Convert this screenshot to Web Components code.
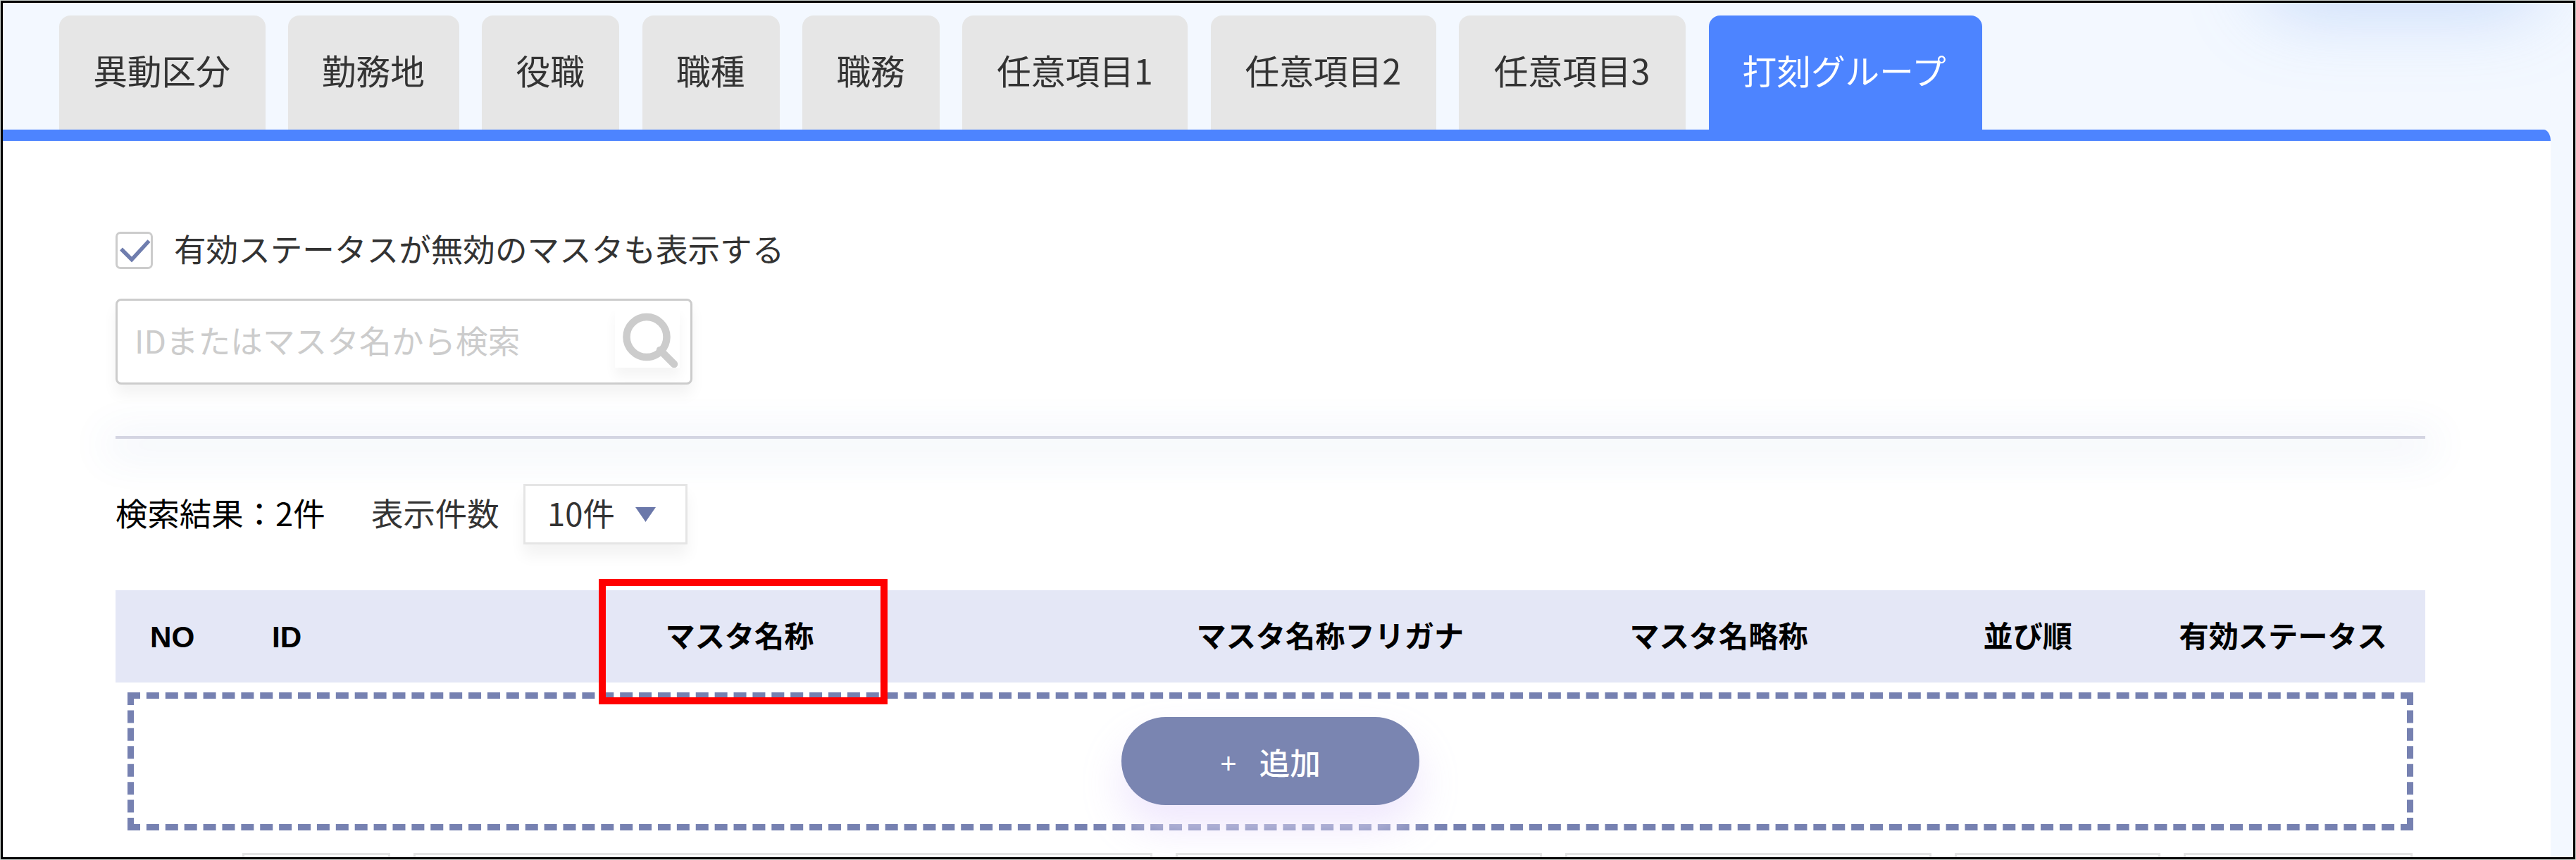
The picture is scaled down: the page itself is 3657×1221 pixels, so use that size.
<!DOCTYPE html>
<html lang="ja">
<head>
<meta charset="utf-8">
<title>マスタ管理</title>
<style>
  html,body{margin:0;padding:0}
  body{
    width:3657px;height:1221px;overflow:hidden;background:#c9cfcc;
    font-family:"Noto Sans CJK JP","Noto Sans",sans-serif;color:#333;
  }
</style>
</head>
<body>
<master-page>
  <master-tabs slot="tabs">
    <master-tab style="--w:293px">異動区分</master-tab>
    <master-tab style="--w:243px">勤務地</master-tab>
    <master-tab style="--w:195px">役職</master-tab>
    <master-tab style="--w:195px">職種</master-tab>
    <master-tab style="--w:195px">職務</master-tab>
    <master-tab style="--w:320px">任意項目1</master-tab>
    <master-tab style="--w:320px">任意項目2</master-tab>
    <master-tab style="--w:322px">任意項目3</master-tab>
    <master-tab style="--w:388px" active>打刻グループ</master-tab>
  </master-tabs>
  <check-option>有効ステータスが無効のマスタも表示する</check-option>
  <search-box placeholder="IDまたはマスタ名から検索"></search-box>
  <section-rule></section-rule>
  <result-bar count="検索結果：2件" label="表示件数" size="10件"></result-bar>
  <master-table></master-table>
</master-page>

<script>
(() => {
  const define = (name, render) => {
    customElements.define(name, class extends HTMLElement {
      connectedCallback() {
        if (this.shadowRoot) return;
        this.attachShadow({ mode: "open" }).innerHTML = render(this);
      }
    });
  };

  define("master-page", () => `
    <style>
      :host{
        display:flex;flex-direction:column;box-sizing:border-box;position:relative;overflow:hidden;
        width:3655px;height:1219px;margin:1px;border:3px solid #000;background:#f3f8ff;
      }
      /* 画面外のヘッダーボタンが落とす影 */
      .glow{
        position:absolute;left:3205px;top:-130px;width:400px;height:110px;border-radius:55px;
        box-shadow:0 30px 105px rgba(120,165,240,.38);
      }
      main{
        box-sizing:border-box;width:3617px;flex:1;min-height:0;padding:125px 178px 0 160px;
        display:flex;flex-direction:column;
        border-top:16px solid #4d84ff;border-top-right-radius:10px 16px;background:#fff;
      }
      main ::slotted(*){flex:none}
    </style>
    <div class="glow"></div>
    <slot name="tabs"></slot>
    <main><slot></slot></main>
  `);

  define("master-tabs", () => `
    <style>
      :host{display:flex;gap:32.4px;height:162px;padding:18px 0 0 79.5px;position:relative}
    </style>
    <slot></slot>
  `);

  define("master-tab", () => `
    <style>
      :host{
        box-sizing:border-box;flex:none;width:var(--w);height:162px;padding:0 1px 8px 0;
        display:flex;align-items:center;justify-content:center;
        border-radius:16px 16px 0 0;background:#e6e6e6;color:#333;
        font-size:48.7px;line-height:60px;white-space:nowrap;
      }
      :host([active]){background:#4d84ff;color:#fff;padding-right:3px}
    </style>
    <slot></slot>
  `);

  define("check-option", () => `
    <style>
      :host{display:flex;align-items:center;gap:30px;height:61px;font-size:45.6px;line-height:60px;white-space:nowrap}
      .box{
        box-sizing:border-box;width:53px;height:53px;border:3px solid #ccc;border-radius:7px;background:#fff;flex:none;
      }
      svg{display:block;width:47px;height:47px;overflow:visible}
      .text{margin-top:-7px}
    </style>
    <span class="box"><svg viewBox="0 0 47 47" aria-hidden="true">
      <path d="M5 21.5L20 36.500L44.500 10" fill="none" stroke="#6f7dae" stroke-width="5.500"/>
    </svg></span>
    <span class="text"><slot></slot></span>
  `);

  define("search-box", (el) => `
    <style>
      :host{
        box-sizing:border-box;display:flex;align-items:center;justify-content:space-between;
        width:819px;height:122px;margin-top:38px;padding:0 15px 0 24px;
        border:3px solid #ccc;border-radius:8px;background:#fff;
        box-shadow:0 14px 20px rgba(0,0,0,.05);
      }
      .placeholder{color:#ccc;font-size:45.7px;line-height:60px;margin-top:-6px;white-space:nowrap}
      .button{width:92px;height:87px;margin-top:-13px;background:#fff;box-shadow:0 13px 16px rgba(0,0,0,.045)}
      svg{display:block;width:92px;height:87px}
    </style>
    <span class="placeholder">${el.getAttribute("placeholder")}</span>
    <span class="button"><svg viewBox="0 0 92 87" aria-hidden="true">
      <circle cx="45" cy="43.500" r="28.500" fill="none" stroke="#ccc" stroke-width="10.500"/>
      <path d="M64 62L84 82" stroke="#ccc" stroke-width="10.500" stroke-linecap="round"/>
    </svg></span>
  `);

  define("section-rule", () => `
    <style>
      :host{
        display:block;height:4px;margin-top:73px;background:#d4d5e2;
        box-shadow:0 10px 60px 14px rgba(70,110,190,.09);
      }
    </style>
  `);

  define("result-bar", (el) => `
    <style>
      :host{display:flex;align-items:center;height:86px;margin-top:64px;font-size:45.4px;line-height:60px;white-space:nowrap}
      .count{width:363px;color:#000;margin-top:-6px}
      .label{width:216px;margin-top:-6px}
      .select{
        box-sizing:border-box;width:233px;height:86px;padding:0 42px 6px 31px;
        display:flex;align-items:center;justify-content:space-between;
        border:3px solid #e5e5e5;background:#fff;box-shadow:0 16px 20px rgba(0,0,0,.05);
      }
      svg{display:block;width:29px;height:21px;margin-top:6px}
    </style>
    <span class="count">${el.getAttribute("count")}</span>
    <span class="label">${el.getAttribute("label")}</span>
    <span class="select">${el.getAttribute("size")}<svg viewBox="0 0 29 21" aria-hidden="true">
      <path d="M0 0h29L14.500 21z" fill="#6b78aa"/>
    </svg></span>
  `);

  const COLUMNS = ["NO", "ID", "マスタ名称", "マスタ名称フリガナ", "マスタ名略称", "並び順", "有効ステータス"];
  const FIELD_WIDTHS = [210, 1049, 520, 520, 292, 325];

  define("master-table", () => `
    <style>
      :host{display:block;margin-top:65px}
      .head{
        display:grid;grid-template-columns:173px 558.500px 754px 615px 502px 278px 1fr;align-items:center;
        box-sizing:border-box;height:131px;padding:2px 0 0 49px;background:#e4e7f6;color:#000;
        font:bold 42.200px/60px "Liberation Sans","Noto Sans CJK JP",sans-serif;white-space:nowrap;
      }
      .target{position:relative}
      .target::after{
        content:"";position:absolute;left:-94.500px;top:-52.500px;width:390px;height:158px;border:10px solid #f00;z-index:2;
      }
      .add{
        box-sizing:border-box;height:196px;margin:14px 17px 0;padding-bottom:1px;
        display:flex;align-items:center;justify-content:center;border:9px dashed #7681b1;
      }
      .fields{display:flex;gap:33px;margin:32px 0 0 180px}
      .fields i{box-sizing:border-box;flex:none;height:60px;border:3px solid #e5e5e5;background:#fff}
    </style>
    <div class="head">
      ${COLUMNS.map((name, i) => `<span class="${i === 2 ? "target" : ""}">${name}</span>`).join("")}
    </div>
    <div class="add"><add-button>追加</add-button></div>
    <div class="fields">
      ${FIELD_WIDTHS.map((w) => `<i style="width:${w}px"></i>`).join("")}
    </div>
  `);

  define("add-button", () => `
    <style>
      :host{
        box-sizing:border-box;display:flex;align-items:center;justify-content:center;gap:32px;
        width:423px;height:125px;padding-top:3px;border-radius:63px;background:#7a85b1;color:#fff;
        box-shadow:0 32px 60px rgba(236,227,253,.85);
        font-size:43.500px;line-height:60px;font-weight:500;white-space:nowrap;
      }
      .plus{font:40px/60px "Liberation Sans",sans-serif;margin-top:4px}
    </style>
    <span class="plus">+</span><span><slot></slot></span>
  `);
})();
</script>
</body>
</html>
